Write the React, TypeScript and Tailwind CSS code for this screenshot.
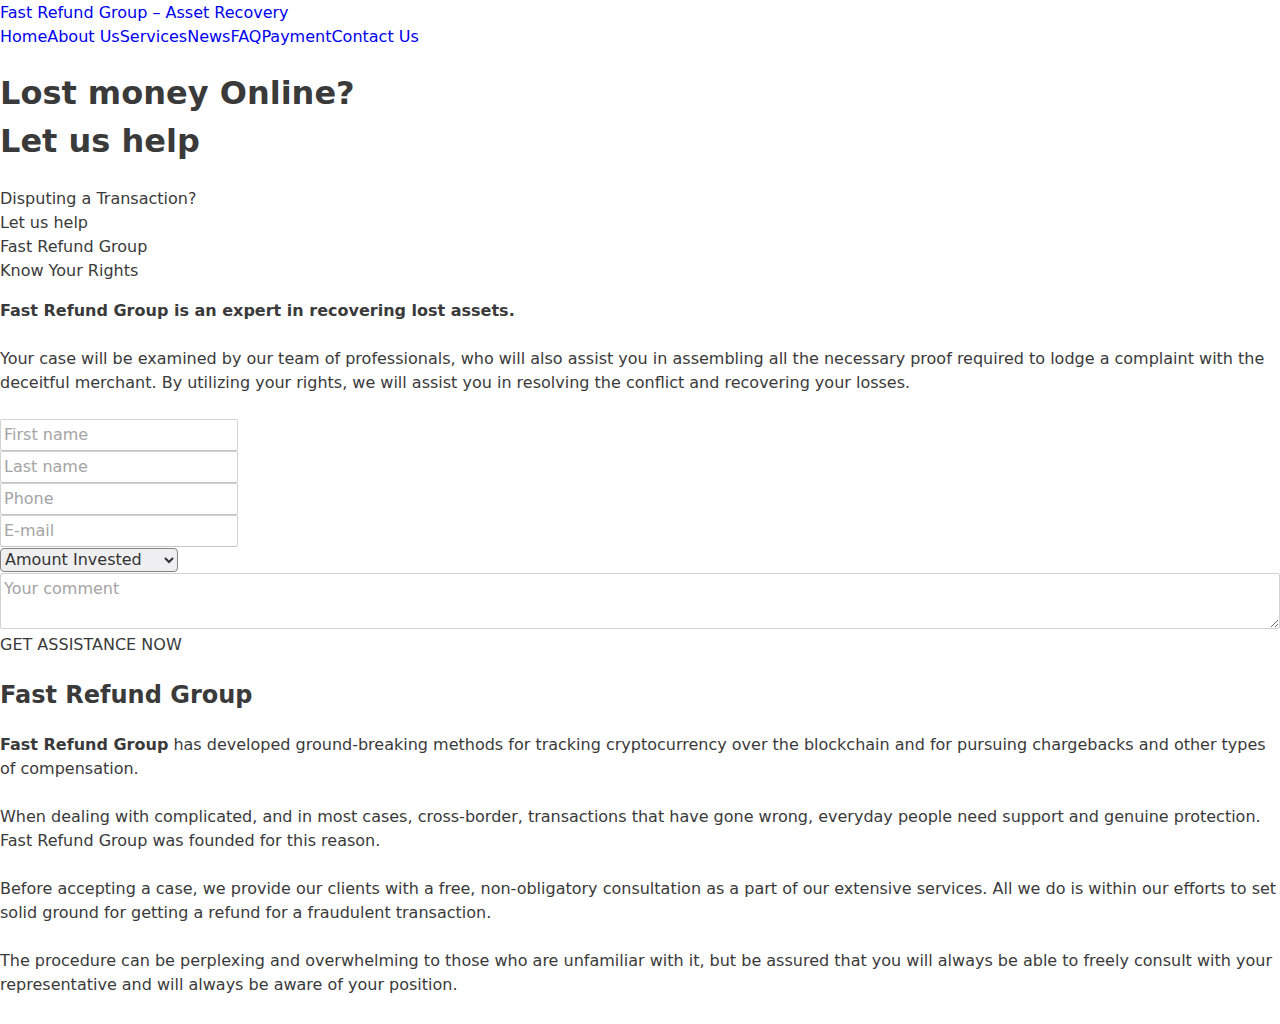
import React from "react";

const navLinks = ["Home", "About Us", "Services", "News", "FAQ", "Payment", "Contact Us"];

const fields = ["First name", "Last name", "Phone", "E-mail"];

export default function App() {
  return (
    <div className="min-h-[1024px] pt-px bg-white text-[#3a3a3a] text-base leading-6 font-['DejaVu_Sans',sans-serif]">
      {/* Header */}
      <header>
        <a href="#" className="block text-[#0000ee]">
          Fast Refund Group – Asset Recovery
        </a>
        <nav className="flex">
          {navLinks.map((l) => (
            <a key={l} href="#" className="text-[#0000ee]">
              {l}
            </a>
          ))}
        </nav>
      </header>

      {/* Hero */}
      <h1 className="mt-5 mb-[22px] text-[32px] leading-[48px] font-bold">
        Lost money Online?
        <br />
        Let us help
      </h1>
      <div>
        <div>Disputing a Transaction?</div>
        <div>Let us help</div>
        <div>Fast Refund Group</div>
        <div>Know Your Rights</div>
      </div>
      <p className="mt-4 font-bold">Fast Refund Group is an expert in recovering lost assets.</p>
      <p className="mt-6">
        Your case will be examined by our team of professionals, who will also assist you in assembling all the
        necessary proof required to lodge a complaint with the deceitful merchant. By utilizing your rights, we will
        assist you in resolving the conflict and recovering your losses.
      </p>

      {/* Form */}
      <form className="mt-6 flex flex-col items-start">
        {fields.map((f) => (
          <input
            key={f}
            type="text"
            placeholder={f}
            className="w-[238px] h-8 px-[3px] pb-0.5 border border-[#d2d2d2] border-b-[#c4c4c4] rounded-[2px] placeholder:text-[#a4a4a4] outline-none"
          />
        ))}
        <select className="mt-px w-[178px] h-6 pl-0 pr-1 pb-px border border-[#858585] rounded-[4px] bg-[#efeff2] text-[#333]">
          <option>Amount Invested</option>
        </select>
        <textarea
          placeholder="Your comment"
          className="mt-px w-full h-14 px-[3px] pt-[3px] border border-[#d2d2d2] rounded-[2px] placeholder:text-[#a4a4a4] outline-none"
        />
        <button type="button" className="mt-1 uppercase text-left">
          Get assistance now
        </button>
      </form>

      {/* About */}
      <h2 className="mt-5 mb-5 text-2xl leading-9 font-bold">Fast Refund Group</h2>
      <p>
        <strong>Fast Refund Group</strong> has developed ground-breaking methods for tracking cryptocurrency over the
        blockchain and for pursuing chargebacks and other types of compensation.
      </p>
      <p className="mt-6">
        When dealing with complicated, and in most cases, cross-border, transactions that have gone wrong, everyday
        people need support and genuine protection. Fast Refund Group was founded for this reason.
      </p>
      <p className="mt-6">
        Before accepting a case, we provide our clients with a free, non-obligatory consultation as a part of our
        extensive services. All we do is within our efforts to set solid ground for getting a refund for a fraudulent
        transaction.
      </p>
      <p className="mt-6">
        The procedure can be perplexing and overwhelming to those who are unfamiliar with it, but be assured that you
        will always be able to freely consult with your representative and will always be aware of your position.
      </p>
    </div>
  );
}
